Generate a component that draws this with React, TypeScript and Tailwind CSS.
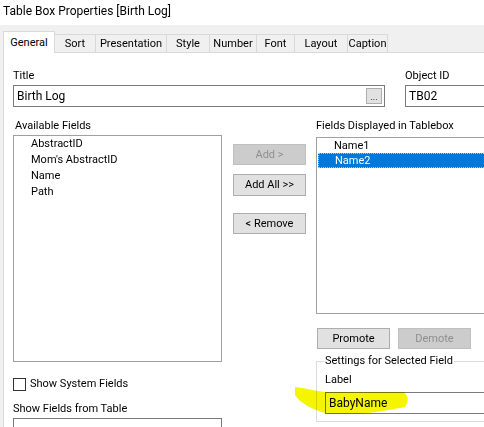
import { ChevronDown } from 'lucide-react';

const tabs = [
    { label: 'Sort', w: 'w-[41px]' },
    { label: 'Presentation', w: 'w-[71px]' },
    { label: 'Style', w: 'w-[43px]' },
    { label: 'Number', w: 'w-[47px]' },
    { label: 'Font', w: 'w-[38px]' },
    { label: 'Layout', w: 'w-[53px]' },
    { label: 'Caption', w: 'w-[40px]' },
];

const available = ['AbstractID', "Mom's AbstractID", 'Name', 'Path'];

function Button({ label, disabled, className = '' }: { label: string; disabled?: boolean; className?: string }) {
    return (
        <div
            className={`h-[21px] w-[73px] shrink-0 flex items-center justify-center border ${
                disabled ? 'bg-[#cccccc] border-[#bfbfbf] text-[#8f8f8f]' : 'bg-[#e1e1e1] border-[#adadad] text-black'
            } ${className}`}
        >
            {label}
        </div>
    );
}

export default function App() {
    return (
        <div className="relative w-[484px] h-[427px] overflow-hidden flex flex-col bg-[#f0f0f0] text-black text-[11px] leading-[14px] font-['Roboto','Liberation_Sans',sans-serif]">
            {/* title bar */}
            <div className="h-[25px] shrink-0 bg-white pl-[3px] pt-[4px] text-[12px] leading-[15px]">
                Table Box Properties [Birth Log]
            </div>

            <div className="flex-1 flex flex-col pl-[3px]">
                {/* tab strip */}
                <div className="h-[27px] shrink-0 flex items-end">
                    <div className="relative z-10 h-[22px] w-[52px] shrink-0 -mb-px flex items-center justify-center bg-white border-l border-t border-r border-[#d9d9d9]">
                        General
                    </div>
                    {tabs.map((t) => (
                        <div
                            key={t.label}
                            className={`h-[18px] ${t.w} shrink-0 flex items-center justify-center pt-[1px] border-t border-r border-[#d9d9d9]`}
                        >
                            {t.label}
                        </div>
                    ))}
                </div>

                {/* panel */}
                <div className="flex-1 bg-white border-l border-t border-[#d9d9d9] pl-[9px]">
                    {/* title + object id */}
                    <div className="flex mt-[16px] gap-[20px]">
                        <div className="w-[372px] shrink-0">
                            <div>Title</div>
                            <div className="relative mt-[2px] h-[22px] border border-[#7a7a7a] pl-[3px] flex items-center text-[12px]">
                                Birth Log
                                <div className="absolute right-[2px] top-[2px] w-[16px] h-[16px] bg-[#e1e1e1] border border-[#adadad] flex items-end justify-center text-[9px] leading-[12px]">
                                    ...
                                </div>
                            </div>
                        </div>
                        <div className="w-[100px] shrink-0">
                            <div>Object ID</div>
                            <div className="mt-[2px] h-[22px] border border-r-0 border-[#7a7a7a] pl-[3px] flex items-center text-[12px]">
                                TB02
                            </div>
                        </div>
                    </div>

                    {/* fields */}
                    <div className="flex mt-[12px]">
                        <div className="w-[209px] shrink-0">
                            <div className="pl-[2px]">Available Fields</div>
                            <div className="mt-[2px] h-[227px] border border-[#a0a0a0] pl-[17px]">
                                {available.map((f) => (
                                    <div key={f} className="h-[16px] leading-[16px]">
                                        {f}
                                    </div>
                                ))}
                            </div>
                            <div className="mt-[15px] flex items-center gap-[4px]">
                                <div className="w-[13px] h-[13px] border border-[#333333] bg-white" />
                                <span>Show System Fields</span>
                            </div>
                            <div className="mt-[11px]">Show Fields from Table</div>
                            <div className="mt-[2px] h-[22px] border border-[#7a7a7a] pl-[3px] pr-[4px] pt-[6px] flex justify-between">
                                <span>All Tables</span>
                                <ChevronDown className="w-[10px] h-[10px] mt-[2px] text-[#555]" strokeWidth={1.5} />
                            </div>
                        </div>

                        <div className="ml-[11px] shrink-0 flex flex-col">
                            <Button label="Add >" disabled className="mt-[25px]" />
                            <Button label="Add All >>" className="mt-[9px] h-[22px]" />
                            <Button label="< Remove" className="mt-[17px]" />
                        </div>

                        <div className="ml-[10px] w-[200px] shrink-0">
                            <div>Fields Displayed in Tablebox</div>
                            <div className="mt-[4px] h-[177px] border border-r-0 border-[#a0a0a0]">
                                <div className="h-[15px] leading-[15px] pl-[17px]">Name1</div>
                                <div className="h-[15px] leading-[13px] ml-[1px] pl-[16px] bg-[#0078d7] text-white border border-dotted border-[#9cc8f0]">
                                    Name2
                                </div>
                            </div>
                            <div className="mt-[14px] ml-[1px] flex gap-[8px]">
                                <Button label="Promote" />
                                <Button label="Demote" disabled />
                            </div>
                            <fieldset className="mt-[5px] border border-r-0 border-[#dcdcdc] pl-[7px] pb-[7px]">
                                <legend className="px-[1px]">Settings for Selected Field</legend>
                                <div className="ml-[1px] mt-[5px]">Label</div>
                                <div className="ml-[1px] mt-[5px] h-[22px] border border-r-0 border-[#7a7a7a] pl-[3px] flex items-center text-[12px]">
                                    BabyName
                                </div>
                            </fieldset>
                        </div>
                    </div>
                </div>
            </div>

            {/* highlighter mark */}
            <svg className="absolute inset-0 pointer-events-none mix-blend-multiply" width="484" height="427">
                <path
                    d="M 295 387 C 305 388 315 391 325 392 L 404 392 Q 411 399 405 407 Q 380 412 360 414 L 330 414 C 314 411 300 403 295 395 Z"
                    fill="#f5f500"
                />
            </svg>
        </div>
    );
}
